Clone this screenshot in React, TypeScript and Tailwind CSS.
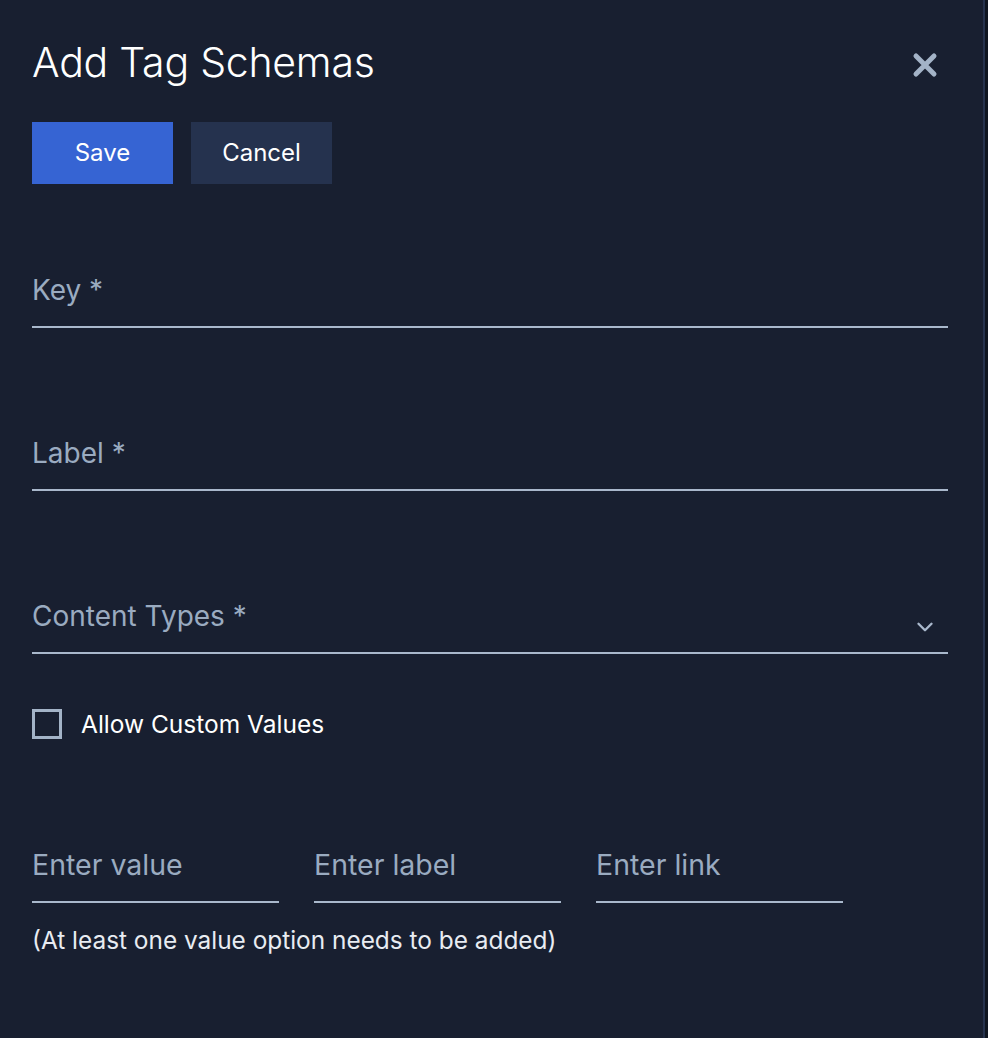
import { ChevronDown } from "lucide-react";

function UnderlineField({ label, chevron }: { label: string; chevron?: boolean }) {
  return (
    <div className="flex h-[56px] items-end justify-between border-b-2 border-[#a9b8cc] pb-[22px]">
      <span className="text-[28px] leading-none text-[#9aabc0]">{label}</span>
      {chevron ? (
        <ChevronDown className="mb-[-10px] mr-[10px] h-[26px] w-[26px] text-[#a9b8cc]" strokeWidth={2.2} />
      ) : null}
    </div>
  );
}

export default function App() {
  return (
    <div
      className="flex min-h-[1038px] w-[988px] bg-[#181f30] text-white"
      style={{ fontFamily: "Inter, 'Noto Sans', sans-serif" }}
    >
      <div className="flex-1 pl-[32px] pr-[35px]">
        <div className="flex items-center justify-between pt-[38px]">
          <h1 className="text-[41px] font-light leading-[48px] tracking-[-0.25px]">Add Tag Schemas</h1>
          <button className="mr-[10px] mt-[6px] text-[#a3b3c7]">
            <svg width="26" height="26" viewBox="0 0 26 26">
              <path d="M4 4 L22 22 M22 4 L4 22" stroke="currentColor" strokeWidth="5" strokeLinecap="round" />
            </svg>
          </button>
        </div>

        <div className="mt-[36px] flex gap-[18px]">
          <button className="h-[62px] w-[141px] bg-[#3664d3] text-[24px] font-normal">Save</button>
          <button className="h-[62px] w-[141px] bg-[#25324e] text-[24px] font-normal">Cancel</button>
        </div>

        <div className="mt-[88px] flex flex-col gap-[107px]">
          <UnderlineField label="Key *" />
          <UnderlineField label="Label *" />
          <UnderlineField label="Content Types *" chevron />
        </div>

        <label className="mt-[55px] flex items-center gap-[19px]">
          <span className="h-[30px] w-[30px] border-[3px] border-[#a3b3c7]" />
          <span className="text-[24.5px] leading-none">Allow Custom Values</span>
        </label>

        <div className="mt-[112px] flex gap-[35px]">
          {["Enter value", "Enter label", "Enter link"].map((p) => (
            <div key={p} className="w-[247px] border-b-2 border-[#a9b8cc] pb-[20px]">
              <span className="text-[28.5px] leading-none text-[#9aabc0]">{p}</span>
            </div>
          ))}
        </div>

        <p className="mt-[25px] text-[24.4px] leading-none text-[#e8ecf2]">
          (At least one value option needs to be added)
        </p>
      </div>
      <div className="w-[2px] bg-[#26324d]" />
      <div className="w-[3px] bg-[#0f1520]" />
    </div>
  );
}
